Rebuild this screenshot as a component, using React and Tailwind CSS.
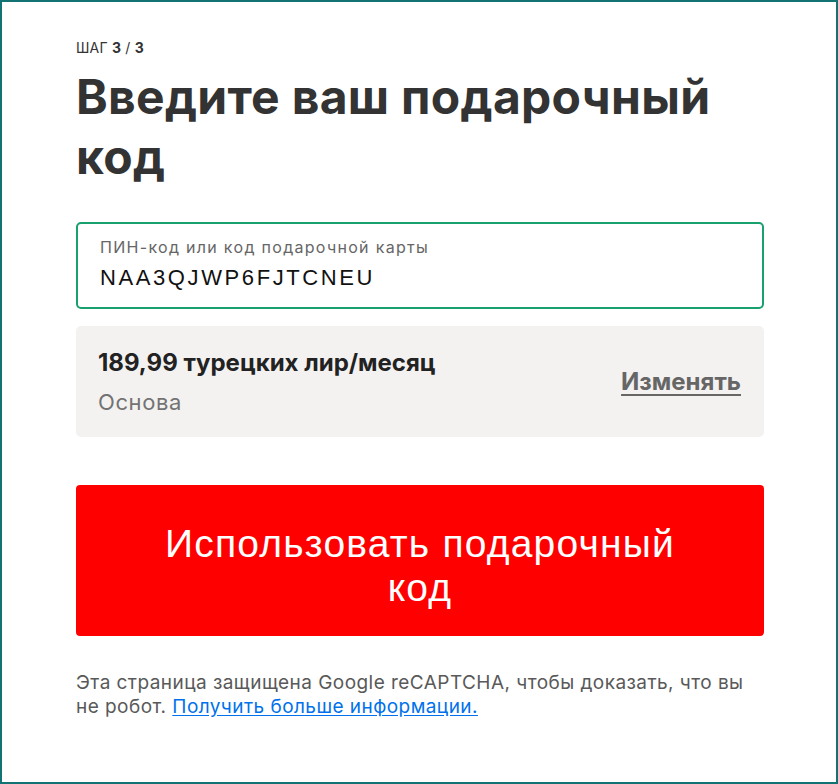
export default function App() {
  return (
    <div className="w-[838px] h-[784px] border-2 border-[#137373] bg-white box-border">
      <div className="pl-[74px] pt-[36px] w-[762px] flex flex-col" style={{ fontFamily: 'Inter, "Noto Sans", sans-serif' }}>
        <div className="text-[14px] leading-[20px] text-[#333] tracking-[0.2px]">
          ШАГ <span className="font-bold">3</span> / <span className="font-bold">3</span>
        </div>
        <h1 className="text-[48px] leading-[60px] font-bold text-[#333] mt-[9px] tracking-[0.3px]">
          Введите ваш подарочный код
        </h1>
        <div className="mt-[35px] h-[87px] border-2 border-[#19a06f] rounded-[5px] px-[22px] pt-[13px]">
          <div className="text-[16px] leading-[20px] text-[#666] tracking-[1.3px]">ПИН-код или код подарочной карты</div>
          <div className="text-[22px] leading-[28px] text-[#111] mt-[7px] tracking-[2.6px]" style={{ fontFamily: '"Liberation Sans", Arial, sans-serif' }}>NAA3QJWP6FJTCNEU</div>
        </div>
        <div className="mt-[17px] h-[111px] bg-[#f3f2f1] rounded-[5px] pl-[22px] pr-[23px] flex items-center justify-between">
          <div className="flex flex-col">
            <div className="text-[24px] leading-[30px] font-bold text-[#222]">189,99 турецких лир/месяц</div>
            <div className="text-[22px] leading-[28px] text-[#737373] mt-[10px] tracking-[0.6px]">Основа</div>
          </div>
          <div className="text-[24px] leading-[30px] font-bold text-[#666] underline underline-offset-[4px] decoration-[2px]">Изменять</div>
        </div>
        <button className="mt-[48px] h-[151px] w-full bg-[#ff0000] rounded-[4px] text-white text-[39px] leading-[44px] tracking-[1.2px] px-[80px] pt-[10px]" style={{ fontFamily: '"Liberation Sans", Arial, sans-serif' }}>
          Использовать подарочный код
        </button>
        <p className="mt-[35px] text-[19px] leading-[24px] text-[#595959] tracking-[0.45px]">
          Эта страница защищена Google reCAPTCHA, чтобы доказать, что вы не робот.{' '}
          <a className="text-[#0071eb] underline underline-offset-[2px]" href="#">Получить больше информации.</a>
        </p>
      </div>
    </div>
  );
}
